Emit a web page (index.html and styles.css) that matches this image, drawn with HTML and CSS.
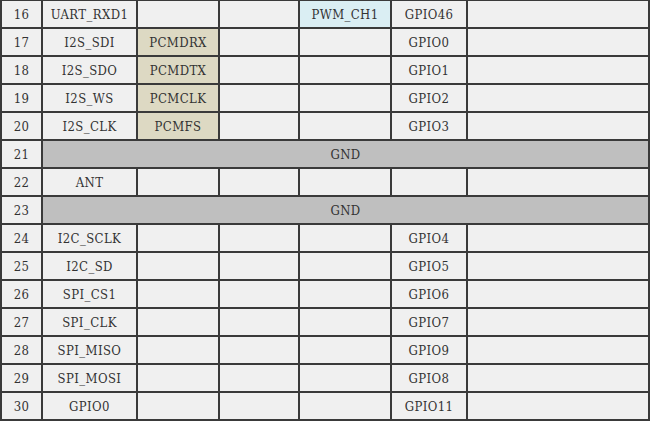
FILE: index.html
```html
<!DOCTYPE html>
<html>
<head>
<meta charset="utf-8">
<link rel="stylesheet" href="styles.css">
</head>
<body>
<table class="pins">
  <colgroup>
    <col class="c-num"><col class="c-name"><col class="c-f1"><col class="c-f2"><col class="c-f3"><col class="c-gpio"><col class="c-rest">
  </colgroup>
  <tbody>
    <tr><td>16</td><td>UART_RXD1</td><td></td><td></td><td class="pwm">PWM_CH1</td><td>GPIO46</td><td></td></tr>
    <tr><td>17</td><td>I2S_SDI</td><td class="pcm">PCMDRX</td><td></td><td></td><td>GPIO0</td><td></td></tr>
    <tr><td>18</td><td>I2S_SDO</td><td class="pcm">PCMDTX</td><td></td><td></td><td>GPIO1</td><td></td></tr>
    <tr><td>19</td><td>I2S_WS</td><td class="pcm">PCMCLK</td><td></td><td></td><td>GPIO2</td><td></td></tr>
    <tr><td>20</td><td>I2S_CLK</td><td class="pcm">PCMFS</td><td></td><td></td><td>GPIO3</td><td></td></tr>
    <tr><td>21</td><td class="gnd" colspan="6">GND</td></tr>
    <tr><td>22</td><td>ANT</td><td></td><td></td><td></td><td></td><td></td></tr>
    <tr><td>23</td><td class="gnd" colspan="6">GND</td></tr>
    <tr><td>24</td><td>I2C_SCLK</td><td></td><td></td><td></td><td>GPIO4</td><td></td></tr>
    <tr><td>25</td><td>I2C_SD</td><td></td><td></td><td></td><td>GPIO5</td><td></td></tr>
    <tr><td>26</td><td>SPI_CS1</td><td></td><td></td><td></td><td>GPIO6</td><td></td></tr>
    <tr><td>27</td><td>SPI_CLK</td><td></td><td></td><td></td><td>GPIO7</td><td></td></tr>
    <tr><td>28</td><td>SPI_MISO</td><td></td><td></td><td></td><td>GPIO9</td><td></td></tr>
    <tr><td>29</td><td>SPI_MOSI</td><td></td><td></td><td></td><td>GPIO8</td><td></td></tr>
    <tr><td>30</td><td>GPIO0</td><td></td><td></td><td></td><td>GPIO11</td><td></td></tr>
  </tbody>
</table>
</body>
</html>
```

FILE: styles.css
```css
html, body {
  margin: 0;
  padding: 0;
  background: #ffffff;
}

.pins {
  border-collapse: collapse;
  table-layout: fixed;
  width: 650px;
  margin-top: -1px;
  font-family: "DejaVu Serif", "Liberation Serif", serif;
  font-stretch: condensed;
  font-size: 13px;
  letter-spacing: 0.4px;
  color: #333333;
}

.pins td {
  border: 2px solid #3a3a3a;
  background: #f0f0f0;
  height: 25px;
  padding: 1px 0 0 0;
  text-align: center;
  vertical-align: middle;
  white-space: nowrap;
  overflow: hidden;
}

.c-num { width: 41px; }
.c-name { width: 95px; }
.c-f1 { width: 82px; }
.c-f2 { width: 80px; }
.c-f3 { width: 92px; }
.c-gpio { width: 76px; }
.c-rest { width: 182px; }

.pins td.pcm { background: #ddd9c3; }
.pins td.pwm { background: #daeef3; }
.pins td.gnd { background: #bfbfbf; }
```
